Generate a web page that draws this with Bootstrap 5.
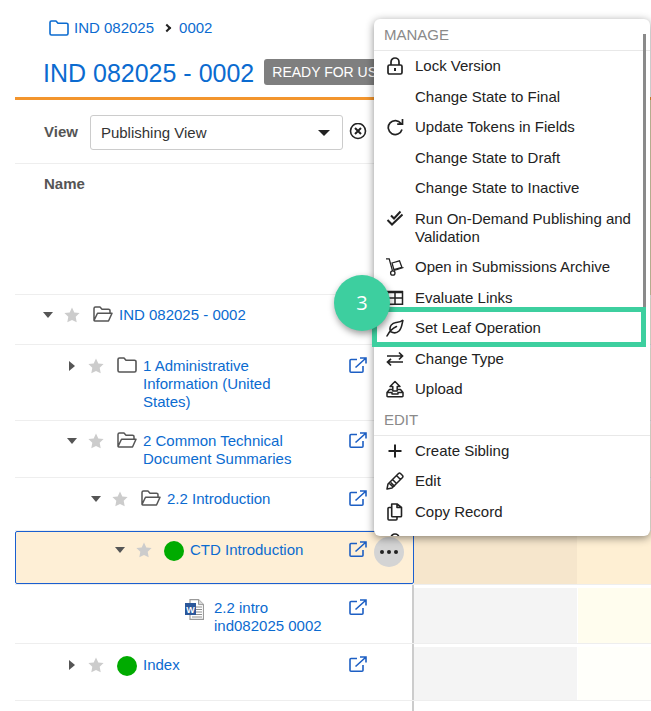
<!DOCTYPE html>
<html lang="en">
<head>
<meta charset="utf-8">
<title>IND 082025 - 0002</title>
<link href="https://cdn.jsdelivr.net/npm/bootstrap@5.3.0/dist/css/bootstrap.min.css" rel="stylesheet">
<style>
html,body{width:651px;height:711px;overflow:hidden;background:#fff}
body{position:relative;font:15px/18px "Liberation Sans",Arial,sans-serif;color:#222}
a{color:#0b6bd0;text-decoration:none}
svg{display:block;flex:none}
.sprite{position:absolute}
.page{padding-left:15px}
.crumbs{height:46px;padding:19px 0 0 34px;margin:0;align-items:flex-start;--bs-breadcrumb-margin-bottom:0}
.crumbs .breadcrumb-item{display:flex;align-items:center;height:17px}
.crumbs .breadcrumb-item a{display:flex;align-items:center;gap:5px}
.crumbs .breadcrumb-item+.breadcrumb-item{padding-left:10px}
.crumbs .breadcrumb-item+.breadcrumb-item::before{content:"";float:none;width:6px;height:6px;padding:0;margin-right:9px;border:solid #222;border-width:2px 2px 0 0;transform:rotate(45deg)}
.title{padding:13px 0 0 29px;border-bottom:3px solid #f3952d;height:54px}
.title h1{font-size:25px;line-height:28px;margin:0 0 0 -1px;color:#0b6bd0;font-weight:400}
.title .badge{margin:0 0 0 10px;background:#7f7f7f;color:#fff;font-size:14px;font-weight:400;line-height:18px;padding:4px 8px;border-radius:3px;height:26px;white-space:nowrap}
.head-left{width:399px;border-right:2px solid #ccc;flex:none}
.tan{flex:1;background:#e4d9b3}
.view{height:64px;padding:15px 0 0 29px;border-bottom:1px solid #eee;color:#555;font-weight:700}
.view select{width:253px;height:35px;margin:0 6px 0 12px;padding:0 10px;font:15px/18px "Liberation Sans",Arial,sans-serif;color:#333;border-color:#ccc;border-radius:3px;box-shadow:none;background-size:18px 12px;background-position:right 9px center;background-image:url("data:image/svg+xml,%3Csvg xmlns='http://www.w3.org/2000/svg' viewBox='0 0 18 12'%3E%3Cpath fill='%23222' d='M3 3h12l-6 6z'/%3E%3C/svg%3E")}
.namecol{height:131px;padding:11px 0 0 29px;color:#555;font-weight:700;border-bottom:1px solid #eee}
.tree-row{display:flex;border-bottom:1px solid #eee}
.cell{width:399px;flex:none;position:relative;display:flex;align-items:flex-start;border-right:2px solid #ccc}
.r1{height:50px}.r1 .cell{padding-top:11px}
.r2{height:76px}.r2 .cell{padding-top:12px}
.r3{height:57px}.r3 .cell{padding-top:11px}
.r4{height:53px}.r4 .cell{padding-top:12px}
.r5{height:54px}.r5 .cell{padding-top:9px;background:#feefd6;border:1px solid #1a5fd0;border-radius:2px}
.r6{height:59px}.r6 .cell{padding-top:14px}
.r7{height:57px}.r7 .cell{padding-top:12px}
.l0{padding-left:21px}.l1{padding-left:45px}.l2{padding-left:69px}.l3{padding-left:92px}
.caret,.star{width:24px;height:18px;display:flex;align-items:center;justify-content:center;flex:none}
.node{margin:0 6px 0 9px;color:#555}
.dot{width:20px;height:20px;border-radius:50%;background:#00ab00;margin:0 6px 0 8px;flex:none}
.r7 .dot{margin:0 6px 0 9px}
.doc{margin:0 10px 0 0}
.word{padding-left:170px}
.ext{margin-left:auto;margin-right:45px;color:#1d5fc4}
.r5 .ext{margin-right:46px}
.more{position:absolute;top:5px;right:9px;width:30px;height:30px;padding:0;border:0;border-radius:50%;background:#d4d4d4;display:flex;align-items:center;justify-content:center}
.more i{width:4px;height:4px;border-radius:50%;background:#222;margin:0 1.5px}
.tail{height:11px}
.side{flex:1;display:flex;padding-top:3px;gap:1px}
.side>div:first-child{width:163px;flex:none;background:#f4f4f4}
.side>div:last-child{flex:1;background:#fffdee}
.r7 .side>div:last-child{background:#fffffa}
.r5 .side{padding-top:0;gap:0}
.r5 .side>div:first-child{background:#f6e6cc}
.r5 .side>div:last-child{background:#feefd3}
.menu{position:absolute;left:374px;top:19px;width:276px;height:517px;overflow:hidden;padding:0;margin:0;border:0;border-radius:6px;box-shadow:0 2px 9px rgba(0,0,0,.45);display:block;z-index:10;font-size:15px;min-width:0}
.menu .dropdown-header{height:31.8px;padding:6.5px 10px 0;font-size:15px;line-height:18px;color:#8a8a8a;border-bottom:1px solid #e8e8e8;margin:0;white-space:nowrap}
.menu .dropdown-header.second{height:31.3px;padding-top:6.5px}
.menu .dropdown-item{display:flex;align-items:flex-start;padding:6.25px 14px 6.25px 12px;color:#222;white-space:normal;font-size:15px;line-height:18px}
.ic{width:29px;flex:none}
.ic svg{width:18px;height:18px;color:#222}
.scroll{position:absolute;right:4px;top:15px;width:3px;height:280px;background:#8a8a8a}
.hl{position:absolute;left:372px;top:307px;width:274px;height:40px;border:5px solid #3dcf9f;z-index:11}
.call{position:absolute;left:334px;top:275px;width:56px;height:56px;border-radius:50%;background:#3dcf9f;color:#fff;font:20px/56px "Open Sans",sans-serif;text-align:center;z-index:12;box-shadow:1px 3px 7px rgba(0,0,0,.4)}
</style>
</head>
<body>
<svg class="sprite" width="0" height="0">
<symbol id="folder" viewBox="0 0 20 16"><path fill="none" stroke="currentColor" stroke-width="1.6" stroke-linejoin="round" d="M1 13.5V2.5A1.5 1.5 0 0 1 2.500 1H7l2 2.200h8.500A1.500 1.500 0 0 1 19 4.700v8.800a1.500 1.500 0 0 1-1.500 1.500h-15A1.500 1.500 0 0 1 1 13.500z"/></symbol>
<symbol id="folderopen" viewBox="0 0 20 16"><path fill="none" stroke="currentColor" stroke-width="1.500" stroke-linejoin="round" d="M1 14V2.500A1.500 1.500 0 0 1 2.500 1H7l2 2.200h6.500A1.500 1.500 0 0 1 17 4.700V7M1 14.500L4.500 7.200H19L15.500 15H2z"/></symbol>
<symbol id="star" viewBox="0 0 16 16"><path fill="#ccc" d="M8 .5l2.300 5 5.300.6-3.900 3.700 1 5.400L8 12.900l-4.700 2.300 1-5.400L.4 6.100l5.300-.6z"/></symbol>
<symbol id="ext" viewBox="0 0 18 16"><path fill="none" stroke="currentColor" stroke-width="1.600" d="M8 2.500H2A1 1 0 0 0 1 3.500v10.700a1 1 0 0 0 1 1h11a1 1 0 0 0 1-1V9M6.500 10.500L16.500 1.500M11 1h6v5.500"/></symbol>
<symbol id="lock" viewBox="0 0 18 18"><rect x="2" y="8" width="14" height="9" rx="1.500" fill="none" stroke="currentColor" stroke-width="1.700"/><path fill="none" stroke="currentColor" stroke-width="1.700" d="M5 8V5a4 4 0 0 1 8 0v3"/><rect x="8" y="11" width="2" height="3" fill="currentColor"/></symbol>
<symbol id="redo" viewBox="0 0 18 18"><path fill="none" stroke="currentColor" stroke-width="1.700" d="M15 5.500A7 7 0 1 0 16 11.500M16.500 1v5.200h-5.300"/></symbol>
<symbol id="checks" viewBox="0 0 18 18"><path fill="none" stroke="currentColor" stroke-width="2" d="M1.500 10l4.500 4.500L16.500 4.500M5 5.500l3 3L14.500 1.500"/></symbol>
<symbol id="dolly" viewBox="0 0 18 18"><path fill="none" stroke="currentColor" stroke-width="1.300" d="M0 .8h3.200l3.300 12M8 12.500l9.500-3"/><circle cx="6.800" cy="15" r="2.200" fill="none" stroke="currentColor" stroke-width="1.300"/><path fill="none" stroke="currentColor" stroke-width="1.300" d="M6 5l7.500-2.200 2.400 6.500-8 2.400z"/></symbol>
<symbol id="grid" viewBox="0 0 18 18"><path fill="none" stroke="currentColor" stroke-width="1.500" d="M1.500 2.800h15v12.500h-15zM9 3v12M1.500 9h15"/><path stroke="currentColor" stroke-width="2.500" d="M1 3h16"/></symbol>
<symbol id="leaf" viewBox="0 0 18 18"><path fill="none" stroke="currentColor" stroke-width="1.600" stroke-linecap="round" d="M17 1c-1 3-1 8-4 11-2.500 2.300-6 2-8.500 .5C2.500 7 6.500 4 10 3.500 12.500 3.200 15 3 17 1zM1 17c2-4 5-7.500 9.500-9.500"/></symbol>
<symbol id="swap" viewBox="0 0 18 18"><path fill="none" stroke="currentColor" stroke-width="1.700" d="M1 6h15.500M13 2.500L16.500 6 13 9.500M17 12H1.500M5 8.800L1.500 12 5 15.500"/></symbol>
<symbol id="upload" viewBox="0 0 18 18"><path fill="none" stroke="currentColor" stroke-width="1.500" stroke-linejoin="round" d="M9 1.500L4 6.500h2.800V11h4.400V6.500H14zM6 9.500H3.500L1 12.500v3.500A.800.800 0 0 0 1.800 16.800h14.400A.800.800 0 0 0 17 16v-3.500l-2.500-3H12M1 12.500h5v1.500h6v-1.500h5"/></symbol>
<symbol id="plus" viewBox="0 0 18 18"><path stroke="currentColor" stroke-width="2" d="M9 2.500v13M2.500 9h13"/></symbol>
<symbol id="pencil" viewBox="0 0 18 18"><path fill="none" stroke="currentColor" stroke-width="1.500" stroke-linejoin="round" d="M12.500 1.500a1.500 1.500 0 0 1 2 0l2 2a1.500 1.500 0 0 1 0 2L6 16 1 17l1-5zM10.500 3.500l4 4M3 11l4 4M4.800 10.500l4 4M7 8l4 4"/></symbol>
<symbol id="copy" viewBox="0 0 18 18"><path fill="none" stroke="currentColor" stroke-width="1.600" stroke-linejoin="round" d="M5.500 4.500H3A1 1 0 0 0 2 5.500V16a1 1 0 0 0 1 1h7a1 1 0 0 0 1-1v-2.500M6 1h5l4.500 3.500V13a.800.800 0 0 1-.8.800H6.500a.800.800 0 0 1-.8-.8V1.800A.800.800 0 0 1 6 1zM11 1v3.500h4.500"/></symbol>
</svg>

<div class="page">
  <nav aria-label="breadcrumb">
    <ol class="breadcrumb crumbs">
      <li class="breadcrumb-item"><a href="#"><svg width="20" height="16"><use href="#folder"/></svg><span>IND 082025</span></a></li>
      <li class="breadcrumb-item"><a href="#">0002</a></li>
    </ol>
  </nav>
  <div class="title d-flex align-items-start">
    <h1>IND 082025 - 0002</h1><span class="badge">READY FOR USE</span>
  </div>
  <div class="d-flex">
    <div class="head-left">
      <div class="view d-flex align-items-start">
        <label class="pt-2">View</label>
        <select class="form-select" aria-label="View"><option>Publishing View</option></select>
        <svg class="mt-2" width="18" height="18" viewBox="0 0 18 18"><circle cx="9" cy="8" r="7.500" fill="none" stroke="#222" stroke-width="1.600"/><path stroke="#222" stroke-width="2" d="M6 5l6 6M12 5l-6 6"/></svg>
      </div>
      <div class="namecol">Name</div>
    </div>
    <div class="tan"></div>
  </div>

  <div class="tree-row r1">
    <div class="cell l0">
      <span class="caret"><svg width="10" height="6"><path fill="#555" d="M0 0h10L5 6z"/></svg></span>
      <span class="star"><svg width="16" height="16"><use href="#star"/></svg></span>
      <svg class="node" width="20" height="16"><use href="#folderopen"/></svg>
      <a href="#">IND 082025 - 0002</a>
    </div>
    <div class="side"><div></div><div></div></div>
  </div>
  <div class="tree-row r2">
    <div class="cell l1">
      <span class="caret"><svg width="6" height="10"><path fill="#555" d="M0 0l6 5-6 5z"/></svg></span>
      <span class="star"><svg width="16" height="16"><use href="#star"/></svg></span>
      <svg class="node" width="20" height="16"><use href="#folder"/></svg>
      <a href="#">1 Administrative<br>Information (United<br>States)</a>
      <svg class="ext" width="18" height="16"><use href="#ext"/></svg>
    </div>
    <div class="side"><div></div><div></div></div>
  </div>
  <div class="tree-row r3">
    <div class="cell l1">
      <span class="caret"><svg width="10" height="6"><path fill="#555" d="M0 0h10L5 6z"/></svg></span>
      <span class="star"><svg width="16" height="16"><use href="#star"/></svg></span>
      <svg class="node" width="20" height="16"><use href="#folderopen"/></svg>
      <a href="#">2 Common Technical<br>Document Summaries</a>
      <svg class="ext" width="18" height="16"><use href="#ext"/></svg>
    </div>
    <div class="side"><div></div><div></div></div>
  </div>
  <div class="tree-row r4">
    <div class="cell l2">
      <span class="caret"><svg width="10" height="6"><path fill="#555" d="M0 0h10L5 6z"/></svg></span>
      <span class="star"><svg width="16" height="16"><use href="#star"/></svg></span>
      <svg class="node" width="20" height="16"><use href="#folderopen"/></svg>
      <a href="#">2.2 Introduction</a>
      <svg class="ext" width="18" height="16"><use href="#ext"/></svg>
    </div>
    <div class="side"><div></div><div></div></div>
  </div>
  <div class="tree-row r5">
    <div class="cell l3">
      <span class="caret"><svg width="10" height="6"><path fill="#555" d="M0 0h10L5 6z"/></svg></span>
      <span class="star"><svg width="16" height="16"><use href="#star"/></svg></span>
      <span class="dot"></span>
      <a href="#">CTD Introduction</a>
      <svg class="ext" width="18" height="16"><use href="#ext"/></svg>
      <button class="more" aria-label="More"><i></i><i></i><i></i></button>
    </div>
    <div class="side"><div></div><div></div></div>
  </div>
  <div class="tree-row r6">
    <div class="cell word">
      <svg class="doc" width="19" height="21" viewBox="0 0 19 21"><path fill="#fff" stroke="#9a9a9a" stroke-width="1.200" d="M5 .6h8.500l5 5v14.800H5z"/><path fill="#d8d8d8" stroke="#9a9a9a" d="M13.500 .6v5h5"/><path stroke="#8f8f8f" d="M11 8h6M11 10.500h6M11 13h6M11 15.500h6M7 18h10"/><rect y="4" width="11" height="12" fill="#2b579a"/><text x="5.500" y="13.500" fill="#fff" font-family="Liberation Sans" font-size="9" font-weight="700" text-anchor="middle">W</text></svg>
      <a href="#">2.2 intro<br>ind082025 0002</a>
      <svg class="ext" width="18" height="16"><use href="#ext"/></svg>
    </div>
    <div class="side"><div></div><div></div></div>
  </div>
  <div class="tree-row r7">
    <div class="cell l1">
      <span class="caret"><svg width="6" height="10"><path fill="#555" d="M0 0l6 5-6 5z"/></svg></span>
      <span class="star"><svg width="16" height="16"><use href="#star"/></svg></span>
      <span class="dot"></span>
      <a href="#">Index</a>
      <svg class="ext" width="18" height="16"><use href="#ext"/></svg>
    </div>
    <div class="side"><div></div><div></div></div>
  </div>
  <div class="cell tail"></div>
</div>

<div class="dropdown-menu menu">
  <h6 class="dropdown-header">MANAGE</h6>
  <a class="dropdown-item" href="#"><span class="ic"><svg><use href="#lock"/></svg></span>Lock Version</a>
  <a class="dropdown-item" href="#"><span class="ic"></span>Change State to Final</a>
  <a class="dropdown-item" href="#"><span class="ic"><svg><use href="#redo"/></svg></span>Update Tokens in Fields</a>
  <a class="dropdown-item" href="#"><span class="ic"></span>Change State to Draft</a>
  <a class="dropdown-item" href="#"><span class="ic"></span>Change State to Inactive</a>
  <a class="dropdown-item" href="#"><span class="ic"><svg><use href="#checks"/></svg></span><span>Run On-Demand Publishing and Validation</span></a>
  <a class="dropdown-item" href="#"><span class="ic"><svg><use href="#dolly"/></svg></span>Open in Submissions Archive</a>
  <a class="dropdown-item" href="#"><span class="ic"><svg><use href="#grid"/></svg></span>Evaluate Links</a>
  <a class="dropdown-item" href="#"><span class="ic"><svg><use href="#leaf"/></svg></span>Set Leaf Operation</a>
  <a class="dropdown-item" href="#"><span class="ic"><svg><use href="#swap"/></svg></span>Change Type</a>
  <a class="dropdown-item" href="#"><span class="ic"><svg><use href="#upload"/></svg></span>Upload</a>
  <h6 class="dropdown-header second">EDIT</h6>
  <a class="dropdown-item" href="#"><span class="ic"><svg><use href="#plus"/></svg></span>Create Sibling</a>
  <a class="dropdown-item" href="#"><span class="ic"><svg><use href="#pencil"/></svg></span>Edit</a>
  <a class="dropdown-item" href="#"><span class="ic"><svg><use href="#copy"/></svg></span>Copy Record</a>
  <a class="dropdown-item" href="#"><span class="ic"><svg><use href="#lock"/></svg></span></a>
  <div class="scroll"></div>
</div>
<div class="hl"></div>
<div class="call">3</div>
</body>
</html>
